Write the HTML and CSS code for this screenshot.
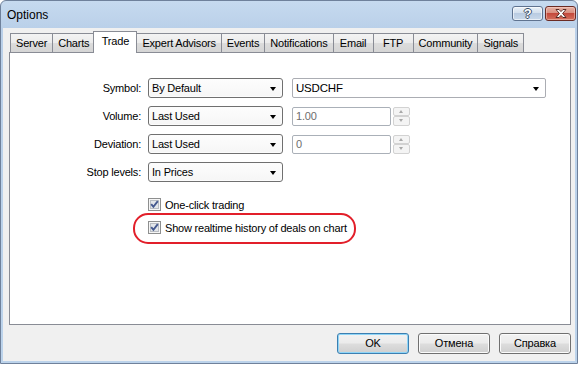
FILE: index.html
```html
<!DOCTYPE html>
<html>
<head>
<meta charset="utf-8">
<title>Options</title>
<link rel="stylesheet" href="styles.css">
</head>
<body>
<div class="window">
  <div class="titlebar">
    <span class="title">Options</span>
    <div class="caption-btns">
      <div class="cbtn help"><span class="qmark">?</span></div>
      <div class="cbtn close">
        <svg width="12" height="9" viewBox="0 0 12 9"><path d="M1 0.5 H4 L6 2.6 L8 0.5 H11 L7.6 4.5 L11 8.5 H8 L6 6.4 L4 8.5 H1 L4.4 4.5 Z" fill="#fff" stroke="#4a1d18" stroke-width="0.9" stroke-linejoin="round"/></svg>
      </div>
    </div>
  </div>
  <div class="client">
    <div class="tabs">
      <div class="tab">Server</div>
      <div class="tab">Charts</div>
      <div class="tab active">Trade</div>
      <div class="tab">Expert Advisors</div>
      <div class="tab">Events</div>
      <div class="tab">Notifications</div>
      <div class="tab">Email</div>
      <div class="tab">FTP</div>
      <div class="tab">Community</div>
      <div class="tab">Signals</div>
    </div>
    <div class="panel">
      <div class="form">
        <div class="row">
          <label class="lbl">Symbol:</label>
          <div class="select">By Default</div>
          <div class="combo">USDCHF</div>
        </div>
        <div class="row">
          <label class="lbl">Volume:</label>
          <div class="select">Last Used</div>
          <div class="input disabled">1.00</div>
          <div class="spin"><div class="spin-up"></div><div class="spin-down"></div></div>
        </div>
        <div class="row">
          <label class="lbl">Deviation:</label>
          <div class="select">Last Used</div>
          <div class="input disabled">0</div>
          <div class="spin"><div class="spin-up"></div><div class="spin-down"></div></div>
        </div>
        <div class="row">
          <label class="lbl">Stop levels:</label>
          <div class="select">In Prices</div>
        </div>
      </div>
      <div class="checks">
        <div class="check">
          <svg class="cb" width="13" height="13" viewBox="0 0 13 13"><rect x="0.5" y="0.5" width="12" height="12" fill="#f6f6f6" stroke="#8e8f8f"/><rect x="2.5" y="2.5" width="8" height="8" fill="#e3e6ea" stroke="#b9bdc3"/><path d="M3.2 6.2 L5.4 8.8 L9.8 3.2" fill="none" stroke="#45598f" stroke-width="1.9"/></svg>
          <span>One-click trading</span>
        </div>
        <div class="check">
          <svg class="cb" width="13" height="13" viewBox="0 0 13 13"><rect x="0.5" y="0.5" width="12" height="12" fill="#f6f6f6" stroke="#8e8f8f"/><rect x="2.5" y="2.5" width="8" height="8" fill="#e3e6ea" stroke="#b9bdc3"/><path d="M3.2 6.2 L5.4 8.8 L9.8 3.2" fill="none" stroke="#45598f" stroke-width="1.9"/></svg>
          <span>Show realtime history of deals on chart</span>
        </div>
      </div>
      <div class="annot"></div>
    </div>
    <div class="buttons">
      <div class="btn default">OK</div>
      <div class="btn">Отмена</div>
      <div class="btn">Справка</div>
    </div>
  </div>
</div>
</body>
</html>
```
FILE: styles.css
```css
* { box-sizing: border-box; }
html, body { margin: 0; padding: 0; background: #fff; }
body {
  width: 581px;
  height: 365px;
  overflow: hidden;
  font-family: "Liberation Sans", Arial, sans-serif;
  font-size: 11px;
  letter-spacing: -0.2px;
  color: #000;
}
.window {
  width: 578px;
  height: 364px;
  border: 1px solid #6f819b;
  border-radius: 6px 6px 0 0;
  background: linear-gradient(#c6daef, #bad0e9 27px, #bcd3eb);
  display: flex;
  flex-direction: column;
}
.titlebar {
  height: 27px;
  display: flex;
  align-items: center;
  padding: 0 1px 0 6px;
}
.title {
  font-size: 12px;
  letter-spacing: 0;
  color: #000;
}
.caption-btns {
  margin-left: auto;
  align-self: flex-start;
  margin-top: 5px;
  display: flex;
  gap: 2px;
}
.cbtn {
  height: 15px;
  border-radius: 3px;
  display: flex;
  align-items: center;
  justify-content: center;
}
.help {
  width: 31px;
  border: 1px solid #5f7390;
  background: linear-gradient(#eaf1f8, #d3dfed 45%, #b9cbe1 50%, #c9d9ea);
  box-shadow: inset 0 0 0 1px rgba(255,255,255,0.6);
}
.qmark {
  font-family: "Liberation Sans", Arial, sans-serif;
  font-size: 13px;
  font-weight: bold;
  color: #fff;
  line-height: 13px;
  text-shadow: -1px 0 #3b4d66, 1px 0 #3b4d66, 0 -1px #3b4d66, 0 1px #3b4d66;
}
.close {
  width: 31px;
  border: 1px solid #6b2b24;
  background: linear-gradient(#e6b1a4, #d98f80 45%, #c4493c 50%, #d4705d);
  box-shadow: inset 0 0 0 1px rgba(255,220,210,0.45);
}
.client {
  flex: 1;
  margin: 0 2px 2px 2px;
  background: #f0f0f0;
  padding: 3px 4px 7px 6px;
  display: flex;
  flex-direction: column;
}
.tabs {
  height: 21px;
  display: flex;
  align-items: flex-end;
  padding-left: 1px;
}
.tab {
  height: 19px;
  min-width: 40px;
  padding: 3px 5px 0 5px;
  line-height: 13px;
  text-align: center;
  border: 1px solid #898c95;
  border-bottom: none;
  border-left-width: 0;
  background: linear-gradient(#f3f3f3, #ebebeb 50%, #dcdcdc 51%, #d5d5d5);
  white-space: nowrap;
}
.tab:first-child { border-left-width: 1px; }
.tab.active {
  position: relative;
  z-index: 2;
  height: 22px;
  margin: 0 -2px -1px -2px;
  padding-top: 3px;
  border-left-width: 1px;
  background: #fff;
  min-width: 44px;
}
.tab.active + .tab { border-left-width: 1px; margin-left: 1px; }
.panel {
  position: relative;
  height: 273px;
  border: 1px solid #898c95;
  background: #fff;
}
.form {
  display: flex;
  flex-direction: column;
  gap: 8px;
  padding-top: 25px;
}
.row {
  display: flex;
  align-items: center;
  height: 20px;
}
.lbl {
  width: 131px;
  margin-right: 7px;
  text-align: right;
}
.select {
  position: relative;
  width: 135px;
  height: 20px;
  border: 1px solid #707070;
  border-radius: 3px;
  background: linear-gradient(#fdfdfd, #f6f6f6);
  padding: 0 0 0 3px;
  line-height: 18px;
  box-shadow: inset 0 0 0 1px #fcfcfc;
}
.select::after,
.combo::after {
  content: "";
  position: absolute;
  top: 8px;
  right: 6px;
  border-left: 3.5px solid transparent;
  border-right: 3.5px solid transparent;
  border-top: 4px solid #000;
}
.combo {
  position: relative;
  margin-left: 9px;
  width: 254px;
  height: 20px;
  border: 1px solid #abadb3;
  border-radius: 2px;
  background: #fff;
  padding-left: 3px;
  line-height: 18px;
  font-size: 11.5px;
}
.input {
  margin-left: 9px;
  width: 99px;
  height: 19px;
  border: 1px solid #aab0b8;
  border-radius: 2px;
  background: #fff;
  padding-left: 3px;
  line-height: 17px;
}
.input.disabled { color: #6d6d6d; }
.spin {
  margin-left: 2px;
  width: 17px;
  height: 19px;
  display: flex;
  flex-direction: column;
}
.spin-up, .spin-down {
  position: relative;
  flex: 1;
  border: 1px solid #d2d2d2;
  border-radius: 2px;
  background: #f4f4f4;
}
.spin-up::after, .spin-down::after {
  content: "";
  position: absolute;
  left: 5px;
  top: 2px;
  border-left: 2.5px solid transparent;
  border-right: 2.5px solid transparent;
}
.spin-up::after { border-bottom: 3px solid #a8a8a8; }
.spin-down::after { border-top: 3px solid #a8a8a8; }
.checks {
  display: flex;
  flex-direction: column;
  gap: 10px;
  margin-top: 16px;
  padding-left: 138px;
}
.check {
  display: flex;
  align-items: center;
  height: 13px;
  gap: 4px;
}
.cb { display: block; flex: none; }
.annot {
  position: absolute;
  left: 123px;
  top: 160px;
  width: 223px;
  height: 31px;
  border: 2px solid #e21f2a;
  border-radius: 15px;
}
.buttons {
  margin-top: 8px;
  display: flex;
  justify-content: flex-end;
  gap: 9px;
}
.btn {
  width: 72px;
  height: 21px;
  border: 1px solid #707070;
  border-radius: 3px;
  background: linear-gradient(#f2f2f2, #ebebeb 48%, #dddddd 52%, #cfcfcf);
  box-shadow: inset 0 0 0 1px #fbfbfb;
  text-align: center;
  line-height: 19px;
}
.btn.default {
  border-color: #3c7fb1;
  box-shadow: inset 0 0 0 1px #8fd5f7;
}
```
